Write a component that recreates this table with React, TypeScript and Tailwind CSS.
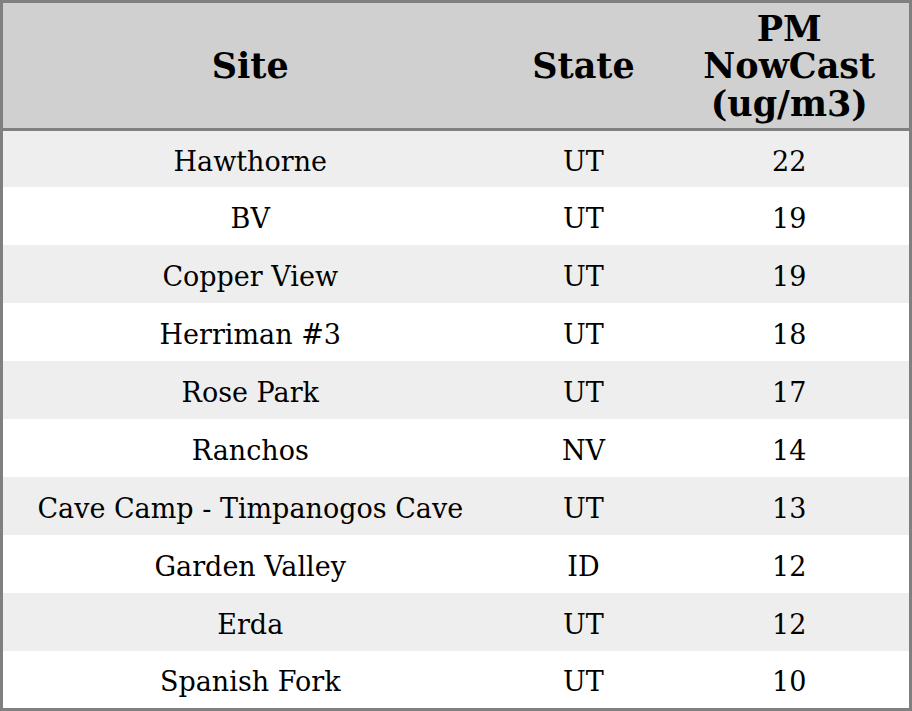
const rows: [string, string, number][] = [
  ["Hawthorne", "UT", 22],
  ["BV", "UT", 19],
  ["Copper View", "UT", 19],
  ["Herriman #3", "UT", 18],
  ["Rose Park", "UT", 17],
  ["Ranchos", "NV", 14],
  ["Cave Camp - Timpanogos Cave", "UT", 13],
  ["Garden Valley", "ID", 12],
  ["Erda", "UT", 12],
  ["Spanish Fork", "UT", 10],
];

export default function App() {
  return (
    <div className="h-[711px] w-[912px] bg-white font-['DejaVu_Serif',serif] text-black">
      <table className="w-[912px] border-collapse border-[3px] border-[#808080]">
        <thead>
          <tr className="h-[128px] border-b-[3px] border-[#808080] bg-[#d0d0d0] text-[35px] leading-[37.5px] font-bold">
            <th className="w-[496px] pt-[1px] text-center">Site</th>
            <th className="w-[172px] pt-[1px] text-center">State</th>
            <th className="pt-[1px] text-center">
              PM
              <br />
              NowCast
              <br />
              (ug/m3)
            </th>
          </tr>
        </thead>
        <tbody className="text-[27px] leading-[32px]">
          {rows.map(([site, state, value], i) => (
            <tr
              key={site}
              className={
                (i % 2 === 0 ? "bg-[#eeeeee] " : "bg-white ") +
                (i === 0 ? "h-[57.5px]" : i === rows.length - 1 ? "h-[58.5px]" : "h-[58px]")
              }
            >
              <td className="pt-[5px] text-center">{site}</td>
              <td className="pt-[5px] text-center">{state}</td>
              <td className="pt-[5px] text-center">{value}</td>
            </tr>
          ))}
        </tbody>
      </table>
    </div>
  );
}
